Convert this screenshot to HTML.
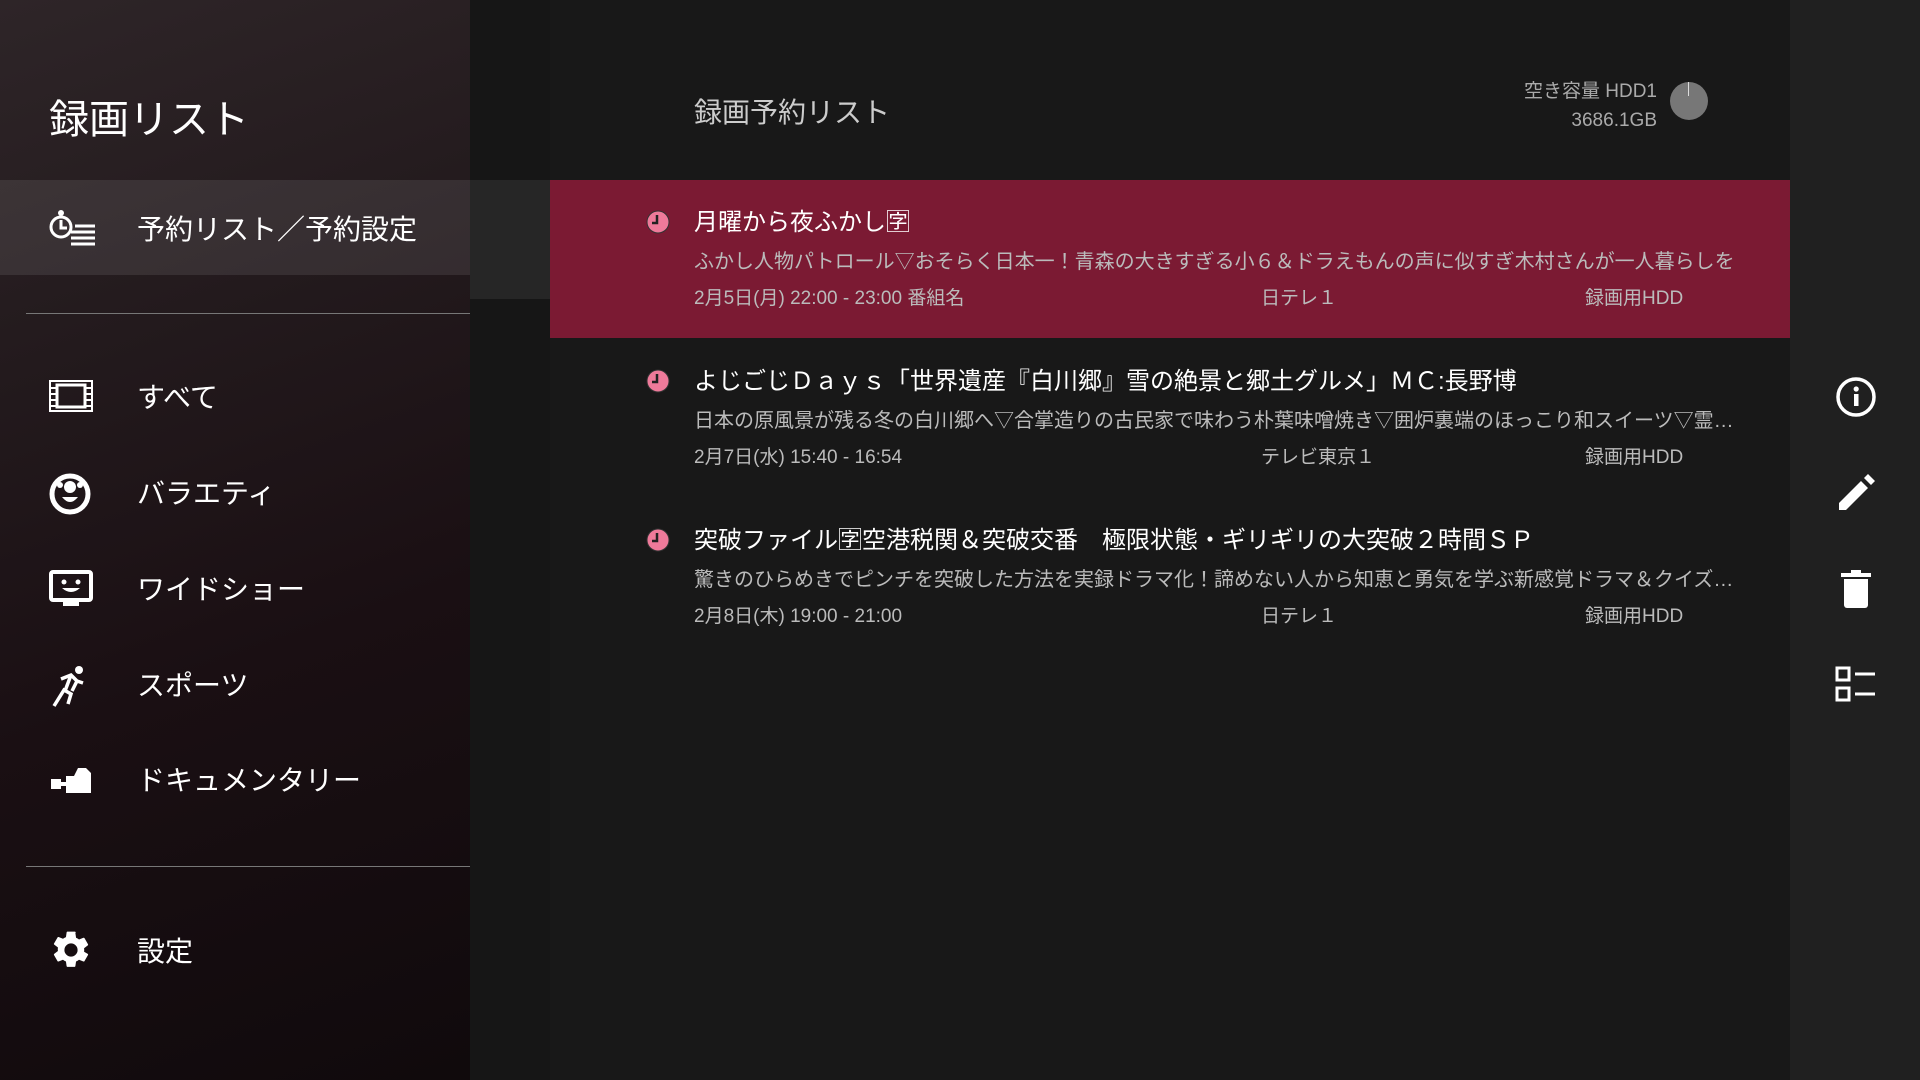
<!DOCTYPE html>
<html><head><meta charset="utf-8"><style>
*{margin:0;padding:0;box-sizing:border-box}
body{width:1920px;height:1080px;overflow:hidden;background:#181818;font-family:"Liberation Sans","Noto Sans CJK JP",sans-serif;position:relative}
.side{position:absolute;left:0;top:0;width:470px;height:1080px;background:linear-gradient(160deg,#2e2528 0%,#231a1d 30%,#1a0f13 60%,#100a0c 100%)}
.strip{position:absolute;left:470px;top:0;width:80px;height:1080px;background:#161616}
.strip .hl{position:absolute;top:180px;height:119px;width:80px;background:#262626}
.main{position:absolute;left:550px;top:0;width:1240px;height:1080px;background:#181818}
.right{position:absolute;left:1790px;top:0;width:130px;height:1080px;background:#202020}
.abs{position:absolute;white-space:nowrap}
.title{left:49px;top:87px;font-size:40px;color:#fff}
.sel{position:absolute;left:0;top:180px;width:470px;height:95px;background:rgba(255,255,255,0.09)}
.nav{font-size:28px;color:#fff;left:137px}
.div{position:absolute;left:26px;width:444px;height:1px;background:#777}
.ic{position:absolute;left:49px}
.row{position:absolute;left:0;width:1240px;height:158px}
.t{font-size:24px;color:#fff;left:144px}
.d{font-size:20px;color:#bbb;left:144px;width:1040px;overflow:hidden;text-overflow:ellipsis}
.m{font-size:19px;color:#bbb}
.ri{position:absolute;left:1835px}
</style></head><body>
<div class="side">
<div class="sel"></div>
<div class="abs title">録画リスト</div>
<svg class="ic" style="top:210px" width="46" height="36" viewBox="0 0 46 36"><circle cx="12" cy="17" r="10" fill="none" stroke="#fff" stroke-width="3"/><path d="M12 10v8h6" stroke="#fff" stroke-width="3" fill="none"/><circle cx="12" cy="3" r="3" fill="#fff"/><path d="M22 22h24M22 28h24M22 34h24M26 16h20" stroke="#fff" stroke-width="3"/></svg>
<div class="abs nav" style="top:208px">予約リスト／予約設定</div>
<div class="div" style="top:313px"></div>
<svg class="ic" style="top:380px" width="44" height="32" viewBox="0 0 44 32"><rect x="1" y="1" width="42" height="30" fill="none" stroke="#fff" stroke-width="2"/><rect x="8" y="5" width="28" height="22" fill="none" stroke="#fff" stroke-width="3"/><path d="M1 8h7M1 14h7M1 20h7M1 26h7M36 8h7M36 14h7M36 20h7M36 26h7" stroke="#fff" stroke-width="2"/></svg>
<div class="abs nav" style="top:376px">すべて</div>
<svg class="ic" style="top:473px" width="42" height="42" viewBox="0 0 42 42"><circle cx="21" cy="21" r="18" fill="none" stroke="#fff" stroke-width="5"/><circle cx="21" cy="14" r="6" fill="#fff"/><path d="M13 24q8 10 16 0z" fill="#fff"/><circle cx="11" cy="12" r="3" fill="#fff"/><circle cx="31" cy="12" r="3" fill="#fff"/></svg>
<div class="abs nav" style="top:472px">バラエティ</div>
<svg class="ic" style="top:570px" width="44" height="38" viewBox="0 0 44 38"><rect x="2" y="2" width="40" height="28" rx="2" fill="none" stroke="#fff" stroke-width="4"/><circle cx="15" cy="12" r="2.5" fill="#fff"/><circle cx="29" cy="12" r="2.5" fill="#fff"/><path d="M13 18q9 8 18 0z" fill="#fff"/><rect x="14" y="31" width="16" height="5" fill="#fff"/></svg>
<div class="abs nav" style="top:568px">ワイドショー</div>
<svg class="ic" style="top:665px" width="44" height="42" viewBox="0 0 44 42"><circle cx="30" cy="5" r="4" fill="#fff"/><path d="M5 41l10-16 7 4-3 10M12 14l10-4 6 6 6 2M22 10l-6 16M28 16l-5 10" stroke="#fff" stroke-width="3.5" fill="none"/></svg>
<div class="abs nav" style="top:664px">スポーツ</div>
<svg class="ic" style="top:766px" width="44" height="30" viewBox="0 0 44 30"><rect x="2" y="13" width="10" height="10" fill="#fff"/><rect x="12" y="16" width="5" height="4" fill="#fff"/><path d="M17 10h8l4-8h8l5 5v20h-25z" fill="#fff"/></svg>
<div class="abs nav" style="top:759px">ドキュメンタリー</div>
<div class="div" style="top:866px"></div>
<svg class="ic" style="top:928px" width="44" height="44" viewBox="0 0 24 24"><path fill="#fff" d="M19.14 12.94c.04-.3.06-.61.06-.94s-.02-.64-.07-.94l2.03-1.580a.49.49 0 0 0 .12-.61l-1.92-3.32a.49.49 0 0 0-.59-.22l-2.39.96c-.5-.38-1.03-.7-1.62-.94l-.36-2.54A.48.48 0 0 0 13.92 2h-3.84c-.24 0-.43.17-.47.41l-.36 2.54c-.59.24-1.130.57-1.62.94l-2.39-.96a.48.48 0 0 0-.59.22L2.74 8.47c-.12.21-.08.47.12.61l2.03 1.58c-.05.3-.09.63-.09.94s.02.64.07.94l-2.03 1.58a.49.49 0 0 0-.12.61l1.92 3.32c.12.22.37.29.59.22l2.39-.96c.5.38 1.03.7 1.62.94l.36 2.54c.05.24.24.41.48.41h3.84c.24 0 .44-.17.47-.41l.36-2.54c.59-.24 1.13-.56 1.62-.94l2.39.96c.22.08.47 0 .59-.22l1.92-3.32c.12-.22.07-.47-.12-.61zM12 15.6A3.6 3.6 0 1 1 12 8.4a3.6 3.6 0 0 1 0 7.2z"/></svg>
<div class="abs nav" style="top:930px">設定</div>
</div>
<div class="strip"><div class="hl"></div></div>
<div class="main">
<div class="abs" style="left:144px;top:91px;font-size:28px;color:#ccc">録画予約リスト</div>
<div class="abs" style="right:133px;top:77px;font-size:19px;color:#aaa;text-align:right;line-height:29px">空き容量 HDD1<br>3686.1GB</div>
<div class="abs" style="left:1120px;top:82px;width:38px;height:38px;border-radius:50%;background:#777"></div>
<div class="abs" style="left:1138px;top:82px;width:1px;height:14px;background:#ddd"></div>

<div class="row" style="top:180px;background:#7b1a33">
<svg class="abs" style="left:96px;top:30px" width="24" height="24" viewBox="0 0 24 24"><circle cx="12" cy="12" r="11" fill="#ee7a9a" stroke="#333" stroke-width="1"/><path d="M11 5v8H6" stroke="#222" stroke-width="2.5" fill="none"/></svg>
<div class="abs t" style="top:22px">月曜から夜ふかし🈑</div>
<div class="abs d" style="top:65px;text-overflow:clip">ふかし人物パトロール▽おそらく日本一！青森の大きすぎる小６＆ドラえもんの声に似すぎ木村さんが一人暮らしを始</div>
<div class="abs m" style="left:144px;top:103px">2月5日(月) 22:00 - 23:00 番組名</div>
<div class="abs m" style="left:711px;top:103px">日テレ１</div>
<div class="abs m" style="left:1035px;top:103px">録画用HDD</div>
</div>

<div class="row" style="top:339px">
<svg class="abs" style="left:96px;top:30px" width="24" height="24" viewBox="0 0 24 24"><circle cx="12" cy="12" r="11" fill="#ee7a9a" stroke="#333" stroke-width="1"/><path d="M11 5v8H6" stroke="#222" stroke-width="2.5" fill="none"/></svg>
<div class="abs t" style="top:22px">よじごじＤａｙｓ「世界遺産『白川郷』雪の絶景と郷土グルメ」ＭＣ:長野博</div>
<div class="abs d" style="top:65px">日本の原風景が残る冬の白川郷へ▽合掌造りの古民家で味わう朴葉味噌焼き▽囲炉裏端のほっこり和スイーツ▽霊峰白山</div>
<div class="abs m" style="left:144px;top:103px">2月7日(水) 15:40 - 16:54</div>
<div class="abs m" style="left:711px;top:103px">テレビ東京１</div>
<div class="abs m" style="left:1035px;top:103px">録画用HDD</div>
</div>

<div class="row" style="top:498px">
<svg class="abs" style="left:96px;top:30px" width="24" height="24" viewBox="0 0 24 24"><circle cx="12" cy="12" r="11" fill="#ee7a9a" stroke="#333" stroke-width="1"/><path d="M11 5v8H6" stroke="#222" stroke-width="2.5" fill="none"/></svg>
<div class="abs t" style="top:22px">突破ファイル🈑空港税関＆突破交番　極限状態・ギリギリの大突破２時間ＳＰ</div>
<div class="abs d" style="top:65px">驚きのひらめきでピンチを突破した方法を実録ドラマ化！諦めない人から知恵と勇気を学ぶ新感覚ドラマ＆クイズバラエティ</div>
<div class="abs m" style="left:144px;top:103px">2月8日(木) 19:00 - 21:00</div>
<div class="abs m" style="left:711px;top:103px">日テレ１</div>
<div class="abs m" style="left:1035px;top:103px">録画用HDD</div>
</div>
</div>
<div class="right"></div>
<svg class="ri" style="top:376px" width="42" height="42" viewBox="0 0 42 42"><circle cx="21" cy="21" r="18" fill="none" stroke="#fff" stroke-width="3.5"/><rect x="19" y="18" width="4.5" height="12" fill="#fff"/><circle cx="21.2" cy="13" r="2.6" fill="#fff"/></svg>
<svg class="ri" style="top:472px" width="42" height="42" viewBox="0 0 42 42"><path d="M4 38v-7l22-22 7 7-22 22z M29 6l4-4 7 7-4 4z" fill="#fff"/></svg>
<svg class="ri" style="top:568px" width="42" height="42" viewBox="0 0 42 42"><rect x="6" y="5" width="30" height="4" fill="#fff"/><rect x="16" y="2" width="10" height="4" fill="#fff"/><path d="M9 11h24v26a3 3 0 0 1-3 3H12a3 3 0 0 1-3-3z" fill="#fff"/></svg>
<svg class="ri" style="top:664px" width="42" height="42" viewBox="0 0 42 42"><rect x="2" y="4" width="12" height="12" fill="none" stroke="#fff" stroke-width="3"/><rect x="2" y="24" width="12" height="12" fill="none" stroke="#fff" stroke-width="3"/><path d="M20 10h20M20 30h20" stroke="#fff" stroke-width="3"/></svg>
</body></html>
